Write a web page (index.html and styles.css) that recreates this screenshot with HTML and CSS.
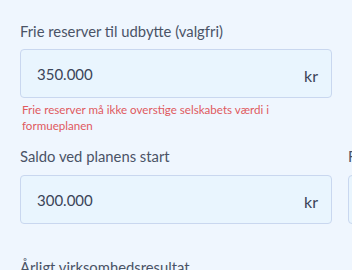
FILE: index.html
```html
<!DOCTYPE html>
<html lang="da">
<head>
<meta charset="utf-8">
<link rel="stylesheet" href="styles.css">
</head>
<body>
<div class="page">
  <div class="field first">
    <div class="label">Frie reserver til udbytte (valgfri)</div>
    <div class="input"><span class="value">350.000</span><span class="unit">kr</span></div>
    <div class="error">Frie reserver må ikke overstige selskabets værdi i formueplanen</div>
  </div>
  <div class="row">
    <div class="field">
      <div class="label">Saldo ved planens start</div>
      <div class="input"><span class="value">300.000</span><span class="unit">kr</span></div>
    </div>
    <div class="field">
      <div class="label">Forventet afkast</div>
      <div class="input"><span class="value">5</span><span class="unit">%</span></div>
    </div>
  </div>
  <div class="field">
    <div class="label">Årligt virksomhedsresultat</div>
  </div>
</div>
</body>
</html>
```
FILE: styles.css
```css
html, body {
  margin: 0;
  padding: 0;
  background: #eff6fe;
  overflow: hidden;
}
.page {
  width: 700px;
  padding: 21px 0 0 20px;
  font-family: Lato, "Noto Sans", sans-serif;
  color: #4a5366;
}
.field {
  width: 312px;
  flex: none;
}
.label {
  font-size: 14.8px;
  line-height: 20px;
  height: 20px;
  margin-bottom: 8px;
  white-space: nowrap;
}
.input {
  box-sizing: border-box;
  height: 49px;
  border: 1px solid #c9d7ef;
  border-radius: 4px;
  background: #e9f5fe;
  display: flex;
  align-items: center;
  justify-content: space-between;
  padding: 0 13px 0 16px;
  font-size: 15px;
  color: #3b4458;
}
.unit {
  font-size: 16px;
  padding-top: 3px;
}
.error {
  margin-top: 4px;
  padding-left: 2px;
  font-size: 11.6px;
  line-height: 16px;
  color: #e05a5f;
}
.first {
  margin-bottom: 12px;
}
.row {
  display: flex;
  gap: 16px;
  margin-bottom: 33px;
}
.row .label {
  margin-bottom: 9px;
}
```
